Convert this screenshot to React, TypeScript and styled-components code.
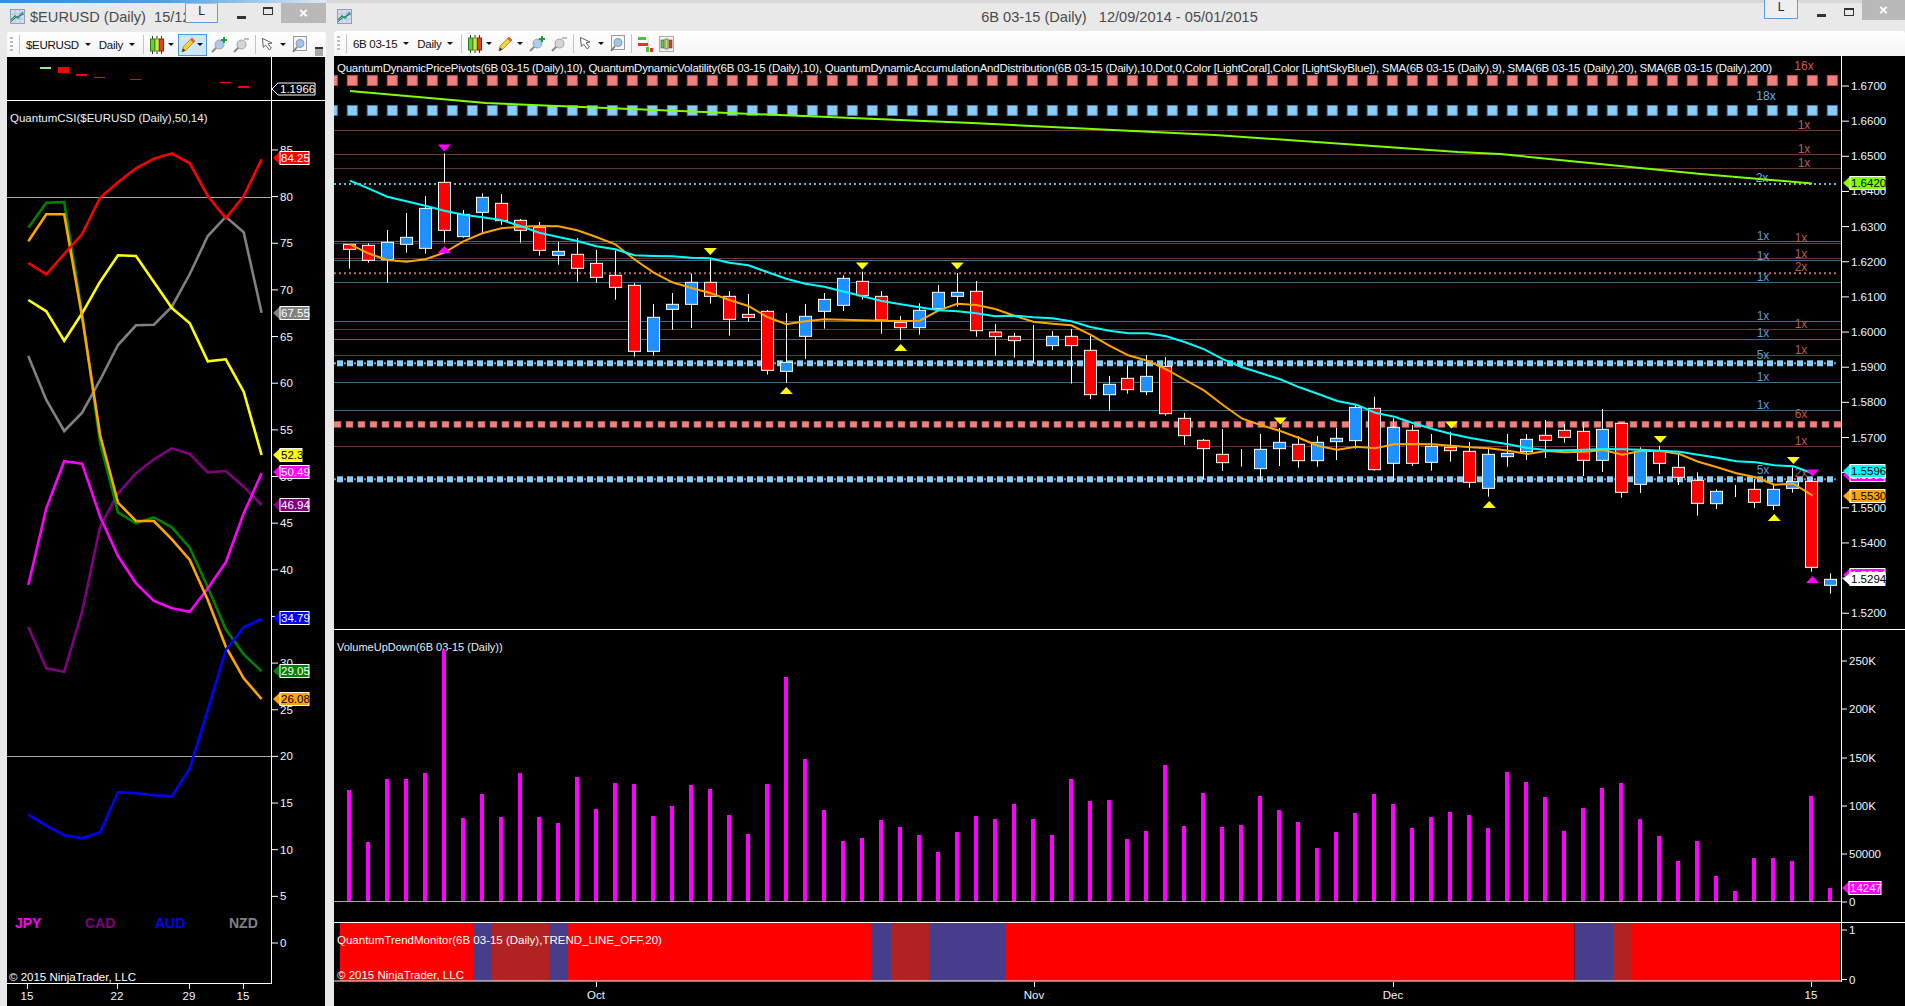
import React from "react";
import styled, { createGlobalStyle } from "styled-components";

const GlobalStyle = createGlobalStyle`
    html, body { margin: 0; padding: 0; background: #e9e9e9; overflow: hidden; }
    * { box-sizing: border-box; }
`;

const Desk = styled.div`
    display: flex;
    width: 1905px;
    height: 1006px;
    font-family: "Liberation Sans", Arial, sans-serif;
    background: #e9e9e9;
`;

const Window = styled.div<{ $w: number; $left: number; $line: string }>`
    width: ${(p) => p.$w}px;
    height: 1006px;
    display: flex;
    flex-direction: column;
    padding-left: ${(p) => p.$left}px;
    background: #e9e9e9;
    border-top: 3px solid;
    border-image: ${(p) => p.$line} 1;
`;

const TitleBar = styled.div<{ $h: number; $centered?: boolean }>`
    position: relative;
    height: ${(p) => p.$h}px;
    margin-top: -1px;
    display: flex;
    align-items: flex-start;
    justify-content: ${(p) => (p.$centered ? "center" : "flex-start")};
`;

const AppIcon = styled.svg<{ $x: number }>`
    position: absolute;
    left: ${(p) => p.$x}px;
    top: 7px;
    width: 15px;
    height: 15px;
`;

const TitleText = styled.div<{ $pl: number }>`
    padding-left: ${(p) => p.$pl}px;
    padding-top: 6px;
    font-size: 14.6px;
    line-height: 18px;
    color: #4a4a4a;
    white-space: pre;
`;

const TabFlag = styled.div<{ $x: number; $w: number; $top: number }>`
    position: absolute;
    left: ${(p) => p.$x}px;
    top: ${(p) => p.$top}px;
    width: ${(p) => p.$w}px;
    height: 20px;
    border: 1px solid #5a9fe0;
    border-top-color: #9cc4ea;
    background: #eeeeee;
    color: #223;
    font-size: 12px;
    line-height: 14px;
    text-align: center;
`;

const WinButtons = styled.div<{ $x: number; $top: number }>`
    position: absolute;
    left: ${(p) => p.$x}px;
    top: ${(p) => p.$top}px;
    right: 0;
    display: flex;
    align-items: flex-start;
`;

const MinBtn = styled.div<{ $w: number; $mt: number }>`
    width: 9px;
    height: 3px;
    margin: ${(p) => p.$mt}px ${(p) => p.$w}px 0 0;
    background: #333;
`;

const MaxBtn = styled.div<{ $w: number; $mt: number }>`
    width: 10px;
    height: 8px;
    margin: ${(p) => p.$mt}px ${(p) => p.$w}px 0 0;
    border: 1px solid #333;
    border-top-width: 2px;
`;

const CloseBtn = styled.div<{ $w: number }>`
    width: ${(p) => p.$w}px;
    height: 20px;
    background: #b9b9b9;
    color: #fff;
    font-size: 15px;
    font-weight: bold;
    line-height: 20px;
    text-align: center;
`;

const Toolbar = styled.div`
    position: relative;
    height: 25px;
    flex: none;
    display: flex;
    align-items: center;
    gap: 6px;
    padding-left: 3px;
    border-radius: 3px 3px 0 0;
    background: linear-gradient(#ffffff, #f4f4f4);
`;

const Grip = styled.div`
    width: 3px;
    height: 15px;
    background: repeating-linear-gradient(#bdbdbd 0 2px, transparent 2px 4px);
`;

const Sep = styled.div<{ $ml?: number }>`
    width: 1px;
    height: 19px;
    margin-left: ${(p) => p.$ml || 0}px;
    background: #c4c4c4;
`;

const ToolLabel = styled.div`
    font-size: 11.5px;
    letter-spacing: -0.3px;
    color: #111;
    white-space: nowrap;
`;

const Caret = styled.div<{ $icon?: boolean }>`
    width: 0;
    height: 0;
    margin-left: ${(p) => (p.$icon ? -2 : 0)}px;
    margin-right: ${(p) => (p.$icon ? 0 : 2)}px;
    border-left: 3px solid transparent;
    border-right: 3px solid transparent;
    border-top: 3px solid #111;
`;

const ActiveTool = styled.div`
    height: 22px;
    width: 29px;
    margin: 0 -2px;
    display: flex;
    align-items: center;
    gap: 3px;
    padding-left: 2px;
    border: 1px solid #4a97dd;
    background: #cfe6f8;
`;

const Overflow = styled.div`
    position: absolute;
    right: 3px;
    bottom: 1px;
    width: 8px;
    height: 9px;
    background: #a8a8a8;
    border-top: 2px solid #333;
`;

const Frame = styled.div<{ $w: number }>`
    width: ${(p) => p.$w}px;
    flex: 1;
    display: flex;
    flex-direction: column;
    background: #000;
    overflow: hidden;
`;

const Pane = styled.svg<{ $h: number }>`
    display: block;
    flex: none;
    width: 100%;
    height: ${(p) => p.$h}px;
    overflow: visible;
`;

const ChartText = styled.text<{ $size?: number; $bold?: boolean }>`
    font-family: "Liberation Sans", Arial, sans-serif;
    font-size: ${(p) => p.$size || 11.5}px;
    font-weight: ${(p) => (p.$bold ? "bold" : "normal")};
    dominant-baseline: central;
`;

// ---------- toolbar icons ----------
const IconChart = ({ x }: { x: number }) => (
    <AppIcon $x={x} viewBox="0 0 15 15">
        <rect x="0.5" y="0.5" width="14" height="14" fill="#d5dcee" stroke="#8f9bb8" />
        <path d="M0 5H15M0 10H15M5 0V15M10 0V15" stroke="#aab4cc" strokeWidth="0.6" />
        <path d="M1 11L5 7L8 9L13 3" fill="none" stroke="#2f9a3c" strokeWidth="1.4" />
        <path d="M1 13L5 9L9 7L14 5" fill="none" stroke="#2a6fd0" strokeWidth="1" />
    </AppIcon>
);

const Candles = () => (
    <svg width="14" height="18" viewBox="0 0 14 18">
        <path d="M2.5 0V18M7 0V18M11.5 0V18" stroke="#333" />
        <rect x="0.5" y="3" width="4" height="12" fill="#5fd03a" stroke="#2b7d1b" />
        <rect x="5" y="3" width="4" height="12" fill="#c9e83f" stroke="#7c8f1c" />
        <rect x="9.5" y="3" width="4" height="12" fill="#ea3b2e" stroke="#9a1f18" />
    </svg>
);

const Pencil = () => (
    <svg width="15" height="16" viewBox="0 0 15 16">
        <path d="M1 15L2 10L11 1L14 4L5 13Z" fill="#f6cf3a" stroke="#a77f16" strokeWidth="0.8" />
        <path d="M1 15L2 11.5L4.5 13.5Z" fill="#333" />
        <path d="M10 2L13 5" stroke="#d75a4a" strokeWidth="2" />
    </svg>
);

const Magnifier = ({ lens, plus }: { lens: string; plus?: boolean }) => (
    <svg width="16" height="16" viewBox="0 0 16 16">
        <path d="M1 15L5.5 10.5" stroke="#8a8a8a" strokeWidth="2" />
        <circle cx="8.5" cy="7.5" r="4.5" fill={lens} stroke="#9aa5b1" />
        {plus ? (
            <path d="M13 0V6M10 3H16" stroke="#15a52b" strokeWidth="2" />
        ) : (
            <path d="M11 2H16" stroke="#bdbdbd" strokeWidth="2" />
        )}
    </svg>
);

const Cursor = () => (
    <svg width="14" height="15" viewBox="0 0 14 15">
        <path d="M1 1L1 10L3.5 8L6.5 13L9 11.5L6 7L10 6.5Z" transform="rotate(-6 5 7)" fill="#fff" stroke="#555" strokeWidth="0.9" />
    </svg>
);

const BoxMagnifier = () => (
    <svg width="15" height="17" viewBox="0 0 15 17">
        <rect x="1.5" y="0.5" width="13" height="14" fill="#f6f6f6" stroke="#9a9a9a" />
        <circle cx="8" cy="7.5" r="4" fill="#9fc6ea" stroke="#8b9aa8" />
        <path d="M1 16L5 11" stroke="#777" strokeWidth="1.6" />
    </svg>
);

const Indicator = () => (
    <svg width="15" height="16" viewBox="0 0 15 16">
        <path d="M0 3H9M0 9H12M10 1V15" stroke="#bbb" strokeWidth="0.6" />
        <rect x="0" y="1" width="8" height="3" fill="#4fbf3a" />
        <rect x="0" y="7" width="10" height="3" fill="#e0332a" />
        <rect x="8" y="11" width="3" height="5" fill="#4fbf3a" />
        <rect x="12" y="12" width="3" height="4" fill="#e0332a" />
    </svg>
);

const BoxedCandles = () => (
    <svg width="15" height="16" viewBox="0 0 15 16">
        <rect x="0.5" y="0.5" width="14" height="15" fill="#f2f2f2" stroke="#aaa" />
        <rect x="2" y="4" width="3" height="8" fill="#5fd03a" stroke="#333" strokeWidth="0.5" />
        <rect x="6" y="3" width="3" height="10" fill="#c9e83f" stroke="#333" strokeWidth="0.5" />
        <rect x="10" y="4" width="3" height="8" fill="#ea3b2e" stroke="#333" strokeWidth="0.5" />
    </svg>
);

// ---------- price pane data ----------
type Row = [string, number, number, number, number];

// candle rows were read off 3x crops, so every segment carries its top offset
const seg = (top: number, rows: Row[]): Row[] =>
    rows.map(([c, a, b, d, e]) => [c, top + a / 3, top + b / 3, top + d / 3, top + e / 3]);

const candles: Row[] = [
    ...seg(130, [
        ["r", 342, 343, 358, 416], ["r", 340, 346, 391, 398], ["b", 300, 337, 389, 458], ["b", 249, 322, 343, 368],
        ["b", 198, 235, 355, 371], ["r", 70, 157, 301, 338], ["b", 240, 253, 320, 323], ["b", 190, 202, 247, 308],
        ["r", 192, 220, 272, 284], ["r", 267, 271, 301, 338], ["r", 276, 292, 361, 377], ["b", 336, 364, 376, 404],
        ["r", 324, 373, 415, 455], ["r", 360, 400, 442, 458], ["r", 362, 436, 472, 509], ["r", 459, 466, 664, 680],
        ["b", 522, 562, 664, 677], ["b", 489, 523, 538, 599], ["b", 431, 457, 523, 594], ["r", 385, 457, 499, 521],
        ["r", 483, 499, 568, 617], ["r", 492, 553, 562, 575], ["r", 540, 544, 721, 734], ["b", 549, 697, 724, 758],
        ["b", 522, 559, 619, 687], ["b", 489, 508, 544, 596], ["b", 436, 445, 526, 543],
    ]),
    ...seg(300, [
        ["r", -85, -56, -13, -1], ["r", -27, -11, 60, 101], ["r", 48, 67, 83, 120], ["b", 10, 31, 83, 104],
        ["b", -45, -23, 26, 26], ["b", -81, -23, -11, 20], ["r", -57, -26, 92, 110], ["r", 72, 96, 110, 167],
        ["r", 99, 109, 122, 173], ["b", 75, 137, 137, 190], ["b", 93, 109, 137, 150], ["r", 87, 109, 137, 251],
        ["r", 108, 151, 284, 297], ["b", 228, 253, 284, 332], ["r", 196, 235, 269, 281], ["b", 165, 229, 275, 285],
        ["r", 171, 199, 341, 347], ["r", 339, 355, 407, 435], ["r", 417, 421, 446, 539], ["r", 387, 463, 488, 513],
        ["b", 447, 493, 493, 500], ["b", 402, 448, 506, 540], ["b", 384, 427, 446, 498], ["r", 408, 433, 482, 503],
        ["b", 408, 427, 482, 500], ["b", 384, 415, 425, 480], ["b", 312, 322, 422, 446],
    ]),
    ...seg(380, [
        ["r", 50, 85, 269, 272], ["b", 115, 142, 250, 305], ["r", 135, 151, 250, 258], ["b", 162, 199, 247, 272],
        ["r", 155, 202, 212, 245], ["r", 186, 214, 307, 323], ["b", 207, 223, 325, 350], ["b", 162, 220, 230, 260],
        ["b", 162, 178, 215, 240], ["r", 120, 166, 181, 234], ["r", 132, 151, 172, 188], ["r", 128, 154, 241, 288],
        ["b", 87, 148, 241, 276], ["r", 128, 130, 337, 353], ["b", 202, 214, 313, 339], ["r", 197, 214, 250, 282],
        ["r", 217, 262, 292, 315], ["r", 277, 301, 370, 407], ["b", 328, 334, 371, 387], ["b", 315, 324, 324, 351],
        ["r", 298, 328, 367, 384], ["b", 315, 328, 376, 390], ["b", 262, 305, 325, 338], ["r", 300, 304, 562, 575],
        ["b", 580, 598, 616, 641],
    ]),
];

const candleX = (i: number) => 349.3 + 18.98 * i;

const trace = (x0: number, sx: number, y0: number, pts: number[][]) =>
    pts.map(([x, y]) => `${(x0 + x / sx).toFixed(1)},${(y0 + y / 3).toFixed(1)}`).join(" ");

const cyanLine = [
    trace(330, 3, 130, [[60,152],[115,175],[172,200],[229,214],[286,227],[343,242],[400,254],[457,262],[514,270],[571,288],[628,308],[685,321],[742,333],[799,349],[856,358],[913,376],[970,378],[1027,379],[1084,383],[1141,385],[1198,398],[1255,406],[1312,426],[1369,446],[1426,461],[1483,470]]),
    trace(850, 3, 300, [[95,3],[152,13],[209,22],[266,31],[322,34],[379,40],[436,49],[493,47],[550,52],[607,55],[664,64],[721,81],[778,92],[835,100],[892,100],[949,109],[1006,127],[1063,148],[1120,178],[1177,202],[1234,220],[1291,238],[1348,262],[1405,282],[1462,303],[1519,314]]),
    trace(1360, 2.877, 380, [[44,98],[99,110],[154,130],[209,147],[263,162],[318,174],[372,184],[427,193],[482,204],[536,210],[591,211],[646,209],[700,207],[755,208],[810,209],[864,212],[919,215],[973,224],[1028,233],[1083,244],[1138,247],[1192,256],[1247,259],[1302,280]]),
].join(" ");

const orangeLine = [
    trace(330, 3, 130, [[60,343],[115,370],[172,390],[229,395],[286,388],[343,368],[400,334],[457,310],[514,295],[571,290],[628,288],[685,289],[742,301],[799,321],[856,343],[913,388],[970,427],[1027,457],[1084,474],[1141,489],[1198,510],[1255,528],[1312,561],[1369,583],[1426,574],[1483,568]]),
    trace(850, 3, 300, [[95,62],[152,63],[209,62],[266,31],[322,11],[379,15],[436,27],[493,47],[550,65],[607,71],[664,76],[721,104],[778,137],[835,166],[892,182],[949,208],[1006,240],[1063,272],[1120,316],[1177,356],[1234,376],[1291,393],[1348,414],[1405,438],[1462,449],[1519,440]]),
    trace(1360, 2.877, 380, [[44,205],[99,193],[154,192],[209,193],[263,197],[318,202],[372,205],[427,212],[482,222],[536,213],[591,217],[646,215],[700,210],[755,224],[810,212],[864,213],[919,222],[973,245],[1028,262],[1083,280],[1138,292],[1192,314],[1247,311],[1302,347]]),
].join(" ");

const greenLine = "350,91 486,103 729,113 972,123 1215,135 1458,152 1500,154 1701,174 1812,183.5";

const brownLevels = [130.5, 154.5, 168.5, 243.5, 258.5, 329.5, 355.5, 446.5];
const steelLevels = [241.5, 260.5, 282.5, 321.5, 339.5, 382.5, 410.5];

const levelTags: [string, string, number, number][] = [
    ["16x", "#cd5c5c", 1804, 66], ["18x", "#6aaee6", 1766, 96], ["1x", "#b85c50", 1804, 125], ["1x", "#b85c50", 1804, 149],
    ["1x", "#b85c50", 1804, 163], ["2x", "#6aaee6", 1762, 178], ["1x", "#5f9ad6", 1763, 236], ["1x", "#b85c50", 1801, 238],
    ["1x", "#b85c50", 1801, 254], ["1x", "#5f9ad6", 1763, 256], ["2x", "#b85c50", 1801, 267], ["1x", "#5f9ad6", 1763, 277],
    ["1x", "#5f9ad6", 1763, 316], ["1x", "#b85c50", 1801, 324], ["1x", "#5f9ad6", 1763, 333], ["1x", "#b85c50", 1801, 350],
    ["5x", "#5f9ad6", 1763, 355], ["1x", "#5f9ad6", 1763, 377], ["1x", "#5f9ad6", 1763, 405], ["6x", "#b85c50", 1801, 414],
    ["1x", "#b85c50", 1801, 441], ["5x", "#5f9ad6", 1763, 470], ["2x", "#b85c50", 1801, 473],
];

const markers: [string, boolean, number, number][] = [
    ["#ff00ff", false, 444.3, 144.5], ["#ff00ff", true, 444.3, 246],
    ["#ffff00", false, 710.3, 248], ["#ffff00", true, 786.3, 387],
    ["#ffff00", false, 862.3, 262.5], ["#ffff00", false, 957.3, 262.5], ["#ffff00", true, 900.7, 344],
    ["#ffff00", false, 1280.3, 417.5], ["#ffff00", false, 1451.4, 421.5], ["#ffff00", true, 1489.3, 501],
    ["#ffff00", false, 1660.3, 436], ["#ffff00", true, 1774.3, 514], ["#ffff00", false, 1793.4, 457],
    ["#ff00ff", false, 1812.5, 469.5], ["#ff00ff", true, 1812.5, 576],
];

const Marker = ({ color, up, x, y }: { color: string; up: boolean; x: number; y: number }) => (
    <polygon
        fill={color}
        points={up ? `${x},${y} ${x + 6.5},${y + 7} ${x - 6.5},${y + 7}` : `${x - 6.5},${y} ${x + 6.5},${y} ${x},${y + 7}`}
    />
);

const Tag = ({ x, y, w, bg, fg, text }: { x: number; y: number; w: number; bg: string; fg: string; text: string }) => (
    <g>
        <polygon fill={bg} points={`${x},${y} ${x + 7},${y - 6.5} ${x + w},${y - 6.5} ${x + w},${y + 6.5} ${x + 7},${y + 6.5}`} />
        <rect x={x + 7} y={y - 6.5} width={w - 7} height={13} fill="none" stroke="#fff" />
        <ChartText x={x + 8} y={y} fill={fg}>{text}</ChartText>
    </g>
);

const Tick = ({ x, y, label, len = 7 }: { x: number; y: number; label: string; len?: number }) => (
    <g>
        <line x1={x} x2={x + len} y1={y} y2={y} stroke="#fff" />
        <ChartText x={x + len + 2} y={y} fill="#eef6ff">{label}</ChartText>
    </g>
);

const range = (n: number) => Array.from({ length: n }, (_, i) => i);

const PriceLevels = () => (
    <g>
        {brownLevels.map((y) => <line key={y} x1="334" x2="1841" y1={y} y2={y} stroke="#6e3535" />)}
        {steelLevels.map((y) => <line key={y} x1="334" x2="1841" y1={y} y2={y} stroke="#3c6a8c" />)}
        <line x1="334" x2="1838" y1="184" y2="184" stroke="#72b4e0" strokeWidth="2" strokeDasharray="2 3" />
        <line x1="334" x2="1838" y1="273.3" y2="273.3" stroke="#b86a6a" strokeWidth="2" strokeDasharray="2 3" />
        <line x1="334" x2="1838" y1="363.3" y2="363.3" stroke="#6aa6cc" strokeWidth="2" strokeDasharray="2 3" />
        <line x1="334" x2="1838" y1="479.3" y2="479.3" stroke="#b86a6a" strokeWidth="2" strokeDasharray="2 3" />
        {range(76).map((i) => (
            <g key={i}>
                <rect x={327.3 + i * 20} y="75.5" width="10" height="10" fill="#f08080" stroke="#b65050" />
                <rect x={327.3 + i * 20} y="105.5" width="10" height="10" fill="#87cefa" stroke="#447fa8" />
            </g>
        ))}
        {range(126).map((i) => <rect key={i} x={334 + i * 12} y="421.3" width="7" height="6" fill="#f08080" stroke="#a85050" strokeWidth="0.6" />)}
        {range(150).map((i) => (
            <g key={i}>
                <rect x={337 + i * 10} y="360.3" width="6" height="6" fill="#87cefa" />
                <rect x={337 + i * 10} y="476.3" width="6" height="6" fill="#87cefa" />
            </g>
        ))}
        {levelTags.map(([t, c, x, y], i) => (
            <ChartText key={i} x={x} y={y} fill={c} textAnchor="middle" $size={12}>{t}</ChartText>
        ))}
    </g>
);

const CandleRow = () => (
    <g>
        {candles.map(([c, wt, bt, bb, wb], i) => {
            const x = Math.round(candleX(i)) + 0.5;
            return (
                <g key={i}>
                    <line x1={x} x2={x} y1={wt} y2={wb} stroke="#fff" />
                    <rect
                        x={x - 6}
                        y={bt}
                        width={12}
                        height={bb - bt}
                        fill={c === "r" ? "#ff0000" : "#1e90ff"}
                        stroke="#fff"
                    />
                </g>
            );
        })}
    </g>
);

const legend = "QuantumDynamicPricePivots(6B 03-15 (Daily),10), QuantumDynamicVolatility(6B 03-15 (Daily),10), QuantumDynamicAccumulationAndDistribution(6B 03-15 (Daily),10,Dot,0,Color [LightCoral],Color [LightSkyBlue]), SMA(6B 03-15 (Daily),9), SMA(6B 03-15 (Daily),20), SMA(6B 03-15 (Daily),200)";

const PricePane = () => (
    <Pane $h={574} viewBox="334 56 1571 574">
        <PriceLevels />
        <ChartText x="337" y="68" fill="#f2f7ff" textLength={1435}>{legend}</ChartText>
        <CandleRow />
        <polyline points={greenLine} fill="none" stroke="#7fff00" strokeWidth="2" />
        <polyline points={orangeLine} fill="none" stroke="#ffa500" strokeWidth="2" />
        <polyline points={cyanLine} fill="none" stroke="#00ffff" strokeWidth="2" />
        {markers.map(([c, up, x, y], i) => <Marker key={i} color={c} up={up} x={x} y={y} />)}
        <line x1="1841.5" x2="1841.5" y1="56" y2="630" stroke="#fff" />
        {range(16).map((i) => (
            <Tick key={i} x={1842} y={86 + i * 35.15} label={(1.67 - i * 0.01).toFixed(4)} />
        ))}
        <Tag x={1843} y={183} w={42} bg="#7fff00" fg="#000" text="1.6420" />
        <Tag x={1843} y={475} w={42} bg="#ff00ff" fg="#fff" text="1.5596" />
        <Tag x={1843} y={471} w={42} bg="#00ffff" fg="#000" text="1.5596" />
        <Tag x={1843} y={496} w={42} bg="#ffa500" fg="#000" text="1.5530" />
        <Tag x={1843} y={575} w={42} bg="#ff00ff" fg="#fff" text="1.5294" />
        <Tag x={1843} y={579} w={42} bg="#fff" fg="#000" text="1.5294" />
        <line x1="334" x2="1905" y1="629.5" y2="629.5" stroke="#fff" />
    </Pane>
);

// ---------- volume pane ----------
const volumeTops = [
    510,666,477,477,459,90,594,522,591,459,591,609,471,567,489,492,588,558,495,507,585,642,492,171,417,570,663,654,600,621,645,696,636,588,597,552,597,645,477,543,540,
    657,633,435,618,519,621,615,528,570,606,684,636,579,522,552,624,591,576,585,624,456,486,531,633,564,504,489,597,648,723,663,768,813,714,714,723,528,804,
];

const volumeTicks: [string, number][] = [["250K", 661], ["200K", 709], ["150K", 758], ["100K", 806], ["50000", 854], ["0", 902]];

const VolumePane = () => (
    <Pane $h={292} viewBox="334 630 1571 292">
        <ChartText x="337" y="647" fill="#e8eef6" $size={11}>VolumeUpDown(6B 03-15 (Daily))</ChartText>
        {volumeTops.map((t, i) => {
            const top = 620 + t / 3;
            return <rect key={i} x={Math.round(candleX(i)) - 2} y={top} width={4} height={901.5 - top} fill="#ff00ff" />;
        })}
        <line x1="334" x2="1841" y1="901.5" y2="901.5" stroke="#a8a8a8" />
        <line x1="1841.5" x2="1841.5" y1="630" y2="922" stroke="#fff" />
        {volumeTicks.map(([label, y]) => <Tick key={label} x={1842} y={y} label={label} len={5} />)}
        <Tag x={1842} y={888} w={39} bg="#ff00ff" fg="#fff" text="14247" />
    </Pane>
);

// ---------- trend monitor pane ----------
const trendBands: [number, number, string][] = [
    [340, 473, "#ff0000"], [473, 492, "#483d8b"], [492, 549, "#b22222"], [549, 568, "#483d8b"], [568, 871, "#ff0000"],
    [871, 891, "#483d8b"], [891, 929, "#b22222"], [929, 1005, "#483d8b"], [1005, 1574.5, "#ff0000"],
    [1574.5, 1613, "#483d8b"], [1613, 1632, "#b22222"], [1632, 1840, "#ff0000"],
];

const TrendPane = () => (
    <Pane $h={60} viewBox="334 922 1571 60">
        {trendBands.map(([a, b, c]) => <rect key={a} x={a} y="922" width={b - a} height="59" fill={c} />)}
        <line x1="334" x2="1905" y1="922.5" y2="922.5" stroke="#fff" />
        <line x1="334" x2="1841" y1="981" y2="981" stroke="#fff" />
        <line x1="1841.5" x2="1841.5" y1="922" y2="982" stroke="#fff" />
        <ChartText x="337" y="940" fill="#fff">QuantumTrendMonitor(6B 03-15 (Daily),TREND_LINE_OFF,20)</ChartText>
        <ChartText x="337" y="975" fill="#fff">© 2015 NinjaTrader, LLC</ChartText>
        <Tick x={1842} y={930} label="1" len={5} />
        <Tick x={1842} y={979.5} label="0" len={5} />
    </Pane>
);

const priceDates: [string, number][] = [["Oct", 596], ["Nov", 1034], ["Dec", 1393], ["15", 1811]];

const DatePane = () => (
    <Pane $h={24} viewBox="334 982 1571 24">
        {priceDates.map(([label, x]) => (
            <g key={label}>
                <line x1={x + 0.5} x2={x + 0.5} y1="982" y2="987" stroke="#fff" />
                <ChartText x={x} y="994.5" fill="#eef6ff" textAnchor="middle">{label}</ChartText>
            </g>
        ))}
    </Pane>
);

// ---------- left CSI window ----------
const z9 = (v: number) => 100 + v / 3;
const z10 = (v: number) => 500 + v / 3;

const csiLines: [string, number[]][] = [
    ["#800080", [...[380,505,515,335,80].map(z10), ...[1180,1120,1078,1045,1062,1117,1113,1160].map(z9), z10(15)]],
    ["#008000", [...[383,308,306,640,1030].map(z9), ...[37,70,52,82,143,262,388,463,514].map(z10)]],
    ["#808080", [768,900,993,938,840,735,676,674,620,522,408,350,397,638].map(z9)],
    ["#ffff00", [600,634,722,640,545,466,468,546,624,670,784,778,875,1065].map(z9)],
    ["#ff00ff", [z10(255), z10(25), z9(1084), z9(1091), ...[50,168,250,303,325,335,265,187,40].map(z10), z9(1120)]],
    ["#ffa500", [...[424,343,343,650,1005].map(z9), ...[8,63,63,118,180,300,440,535,597].map(z10)]],
    ["#0000ff", [944,977,1006,1015,997,877,880,886,889,805,630,450,382,357].map(z10)],
    ["#ff0000", [489,523,462,402,293,247,205,176,160,190,288,355,288,178].map(z9)],
];

const csiTags: [string, number, string, string, number][] = [
    ["84.25", 158, "#ff0000", "#fff", 36], ["67.55", 313, "#808080", "#fff", 36], ["52.3", 455, "#ffff00", "#000", 29],
    ["50.49", 472, "#ff00ff", "#fff", 36], ["46.94", 505, "#800080", "#fff", 36], ["34.79", 618, "#0000ff", "#fff", 36],
    ["29.05", 671, "#008000", "#fff", 36], ["26.08", 699, "#ffa500", "#000", 36],
];

const currencies: [string, string, number][] = [
    ["JPY", "#ff00ff", 15], ["CAD", "#800080", 85], ["AUD", "#0000ff", 155], ["NZD", "#808080", 229],
];

const dashes: [number, number, number, number, string][] = [
    [40, 67, 11, 2, "#90ee90"], [58, 67, 11, 6, "#ff0000"], [76, 74, 11, 2, "#ff0000"], [94, 77, 11, 1, "#ff0000"],
    [130, 79, 11, 1, "#ff0000"], [220, 82, 11, 1, "#ff0000"], [238, 86, 11, 2, "#ff0000"],
];

const OverviewPane = () => (
    <Pane $h={44} viewBox="7 57 318 44">
        {dashes.map(([x, y, w, h, c]) => <rect key={x} x={x} y={y} width={w} height={h} fill={c} />)}
        <line x1="271.5" x2="271.5" y1="57" y2="101" stroke="#fff" />
        <line x1="7" x2="325" y1="100.5" y2="100.5" stroke="#fff" />
        <polygon fill="#000" stroke="#fff" points="272,89 278,83 315,83 315,95 278,95" />
        <ChartText x="280" y="89" fill="#fff">1.1966</ChartText>
    </Pane>
);

const CsiPane = () => (
    <Pane $h={883} viewBox="7 101 318 883">
        <ChartText x="10" y="118" fill="#e6f2ff">QuantumCSI($EURUSD (Daily),50,14)</ChartText>
        <line x1="7" x2="271" y1="197.5" y2="197.5" stroke="#a8a8a8" />
        <line x1="7" x2="271" y1="756.5" y2="756.5" stroke="#a8a8a8" />
        {range(18).map((i) => (
            <Tick key={i} x={272} y={943 - i * 46.65} label={String(i * 5)} len={6} />
        ))}
        {csiLines.map(([c, ys]) => (
            <polyline
                key={c}
                fill="none"
                stroke={c}
                strokeWidth="2.6"
                points={ys.map((y, i) => `${(28.3 + i * 17.95).toFixed(1)},${y.toFixed(1)}`).join(" ")}
            />
        ))}
        {csiTags.map(([t, y, bg, fg, w]) => <Tag key={t} x={273} y={y} w={w} bg={bg} fg={fg} text={t} />)}
        {currencies.map(([t, c, x]) => (
            <ChartText key={t} x={x} y="923" fill={c} $size={14} $bold>{t}</ChartText>
        ))}
        <ChartText x="9" y="977" fill="#fff">© 2015 NinjaTrader, LLC</ChartText>
        <line x1="271.5" x2="271.5" y1="101" y2="984" stroke="#fff" />
        <line x1="7" x2="272" y1="983.5" y2="983.5" stroke="#fff" />
    </Pane>
);

const csiDates: [string, number][] = [["15", 27], ["22", 117], ["29", 189], ["15", 243]];

const CsiDatePane = () => (
    <Pane $h={22} viewBox="7 984 318 22">
        {csiDates.map(([label, x]) => (
            <g key={x}>
                <line x1={x + 0.5} x2={x + 0.5} y1="984" y2="989" stroke="#fff" />
                <ChartText x={x} y="996" fill="#eef6ff" textAnchor="middle">{label}</ChartText>
            </g>
        ))}
    </Pane>
);

function App() {
    return (
        <Desk>
            <GlobalStyle />
            <Window $w={326} $left={7} $line="linear-gradient(90deg, #2f8fe0 0%, #4aa0e6 50%, #dfe8f0 100%)">
                <TitleBar $h={30}>
                    <IconChart x={3} />
                    <TitleText $pl={23}>{"$EURUSD (Daily)  15/12/"}</TitleText>
                    <TabFlag $x={178} $w={33} $top={1}>L</TabFlag>
                    <WinButtons $x={230} $top={1}>
                        <MinBtn $w={17} $mt={13} />
                        <MaxBtn $w={8} $mt={4} />
                        <CloseBtn $w={45}>×</CloseBtn>
                    </WinButtons>
                </TitleBar>
                <Toolbar>
                    <Grip />
                    <Sep />
                    <ToolLabel>$EURUSD</ToolLabel>
                    <Caret />
                    <ToolLabel>Daily</ToolLabel>
                    <Caret />
                    <Sep />
                    <Candles />
                    <Caret $icon />
                    <ActiveTool>
                        <Pencil />
                        <Caret $icon />
                    </ActiveTool>
                    <Magnifier lens="#a9cdea" plus />
                    <Magnifier lens="#d5d5d5" />
                    <Sep />
                    <Cursor />
                    <Caret $icon />
                    <BoxMagnifier />
                    <Overflow />
                </Toolbar>
                <Frame $w={318}>
                    <OverviewPane />
                    <CsiPane />
                    <CsiDatePane />
                </Frame>
            </Window>
            <Window $w={1579} $left={8} $line="linear-gradient(#d8d8d8, #d8d8d8)">
                <TitleBar $h={29} $centered>
                    <IconChart x={3} />
                    <TitleText $pl={0}>{"6B 03-15 (Daily)   12/09/2014 - 05/01/2015"}</TitleText>
                    <TabFlag $x={1430} $w={34} $top={-3}>L</TabFlag>
                    <WinButtons $x={1483} $top={-2}>
                        <MinBtn $w={18} $mt={14} />
                        <MaxBtn $w={8} $mt={8} />
                        <CloseBtn $w={44}>×</CloseBtn>
                    </WinButtons>
                </TitleBar>
                <Toolbar>
                    <Grip />
                    <Sep />
                    <ToolLabel>6B 03-15</ToolLabel>
                    <Caret />
                    <ToolLabel>Daily</ToolLabel>
                    <Caret />
                    <Sep />
                    <Candles />
                    <Caret $icon />
                    <Pencil />
                    <Caret $icon />
                    <Magnifier lens="#a9cdea" plus />
                    <Magnifier lens="#d5d5d5" />
                    <Sep />
                    <Cursor />
                    <Caret $icon />
                    <BoxMagnifier />
                    <Sep />
                    <Indicator />
                    <BoxedCandles />
                </Toolbar>
                <Frame $w={1571}>
                    <PricePane />
                    <VolumePane />
                    <TrendPane />
                    <DatePane />
                </Frame>
            </Window>
        </Desk>
    );
}

export default App;
